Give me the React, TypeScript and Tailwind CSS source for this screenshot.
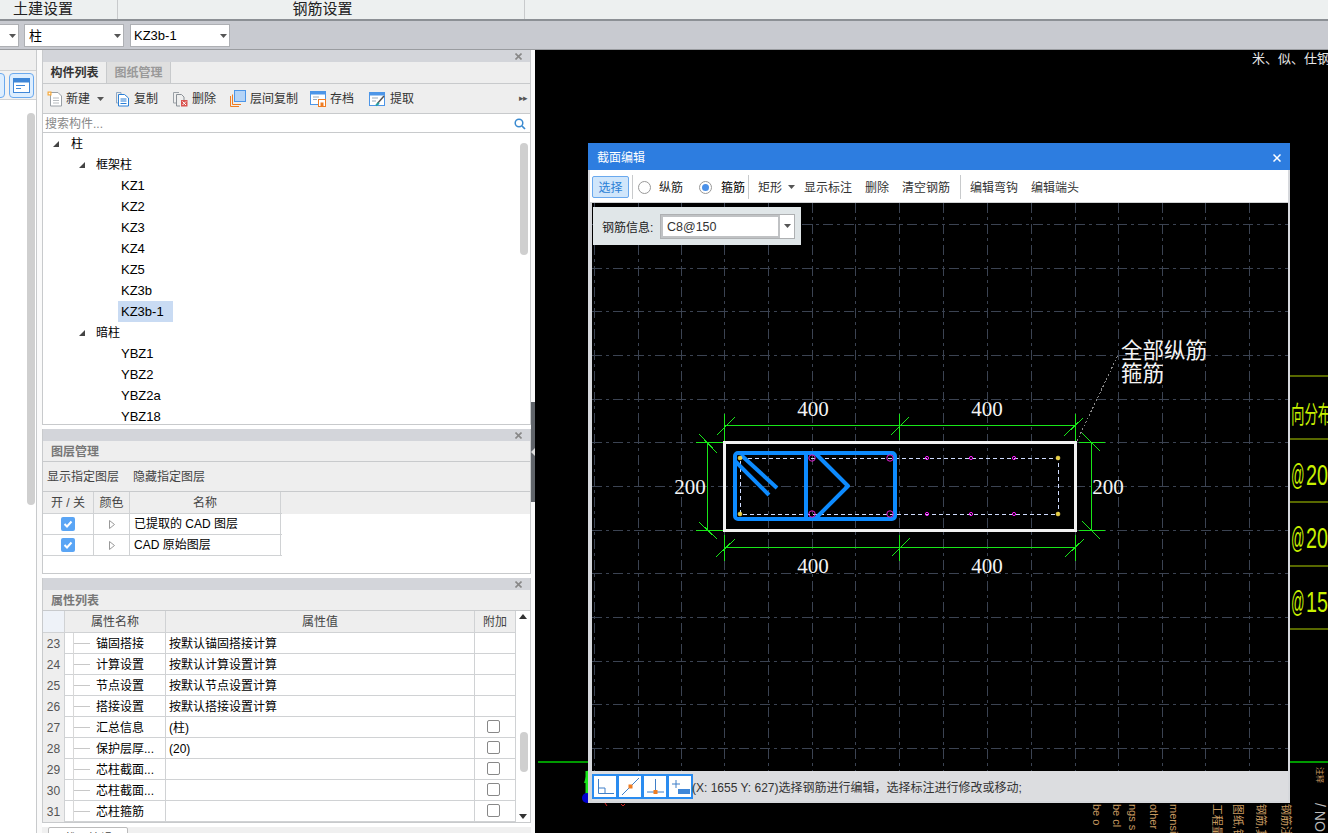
import React from "react";

const Caret = ({ className = "" }: { className?: string }) => (
  <svg width="7" height="4" viewBox="0 0 7 4" className={className}><polygon points="0,0 7,0 3.5,4" fill="#555" /></svg>
);

const Close = () => (
  <svg width="7" height="7" viewBox="0 0 7 7" className="mr-2"><path d="M0.5 0.5L6.5 6.5M6.5 0.5L0.5 6.5" stroke="#888" strokeWidth="1.6" /></svg>
);

const TitleStrip = () => (
  <div className="h-[12px] shrink-0 bg-[#d3d5da] flex items-center justify-end"><Close /></div>
);

const Expand = ({ className = "" }: { className?: string }) => (
  <svg width="8" height="8" viewBox="0 0 8 8" className={className}><polygon points="7,1 7,7 1,7" fill="#444" /></svg>
);

const NewIcon = () => (
  <svg width="16" height="16" viewBox="0 0 16 16">
    <path d="M3.5 1.5H11L14.5 5V15H3.5Z" fill="#fff" stroke="#9aa0a6" />
    <path d="M6 7H12M6 9.5H12M6 12H12" stroke="#b8bcc0" />
    <rect x="0.5" y="0.5" width="4" height="4" fill="#f7a93b" />
    <rect x="1.7" y="1.7" width="1.6" height="1.6" fill="#fff" />
  </svg>
);
const CopyIcon = () => (
  <svg width="15" height="16" viewBox="0 0 15 16">
    <path d="M1.5 1.5H6V3" fill="none" stroke="#8fa8c4" />
    <path d="M1.5 1.5V12H3" fill="none" stroke="#8fa8c4" />
    <path d="M3.5 3.5H9.5L13.5 7V15H3.5Z" fill="#fff" stroke="#2a7fd6" />
    <path d="M5.5 8H11.5M5.5 10H11.5M5.5 12.5H11.5" stroke="#2a7fd6" />
  </svg>
);
const DelIcon = () => (
  <svg width="16" height="16" viewBox="0 0 16 16">
    <path d="M1.5 1.5H7M1.5 1.5V12H4" fill="none" stroke="#9aa0a6" />
    <path d="M4.5 3.5H9.5L12 6V9M4.5 3.5V15H8" fill="none" stroke="#8a9096" />
    <rect x="9" y="9" width="6.5" height="6.5" fill="#d9534f" />
    <path d="M10.5 10.5L14 14M14 10.5L10.5 14" stroke="#fff" />
  </svg>
);
const LayerIcon = () => (
  <svg width="16" height="17" viewBox="0 0 16 17">
    <path d="M0.5 6V16.5H9" fill="none" stroke="#ef7d22" />
    <path d="M2.5 4.5V14.5H11" fill="none" stroke="#ef7d22" />
    <rect x="4.5" y="0.5" width="11" height="11" fill="#b5d4f7" stroke="#4d96e8" />
  </svg>
);
const SaveIcon = () => (
  <svg width="16" height="16" viewBox="0 0 16 16">
    <rect x="0.5" y="0.5" width="15" height="13" fill="#fff" stroke="#4d96e8" />
    <rect x="0.5" y="0.5" width="15" height="3" fill="#4d96e8" />
    <path d="M3 6H9M3 8.5H7" stroke="#9ab" />
    <rect x="8.5" y="8.5" width="7" height="7" fill="#fff" stroke="#ef7d22" />
    <rect x="10.5" y="11.5" width="3" height="4" fill="#ef7d22" />
  </svg>
);
const ExtractIcon = () => (
  <svg width="17" height="16" viewBox="0 0 17 16">
    <rect x="0.5" y="1.5" width="15" height="13" fill="#fff" stroke="#4d96e8" />
    <rect x="0.5" y="1.5" width="15" height="3" fill="#4d96e8" />
    <path d="M3 7H9M3 10H7" stroke="#9ab" />
    <path d="M8 13L15 5" stroke="#555" strokeWidth="1.5" />
    <path d="M7 14.5L10 12" stroke="#27a3a3" strokeWidth="2" />
  </svg>
);

const tools: { icon: React.ReactNode; label: string; w: string }[] = [
  { icon: <CopyIcon />, label: "复制", w: "w-[57px]" },
  { icon: <DelIcon />, label: "删除", w: "w-[58px]" },
  { icon: <LayerIcon />, label: "层间复制", w: "w-[80px]" },
  { icon: <SaveIcon />, label: "存档", w: "w-[59px]" },
  { icon: <ExtractIcon />, label: "提取", w: "w-[60px]" },
];

const tree: { t: string; level: number; sel?: boolean }[] = [
  { t: "柱", level: 0 },
  { t: "框架柱", level: 1 },
  { t: "KZ1", level: 2 },
  { t: "KZ2", level: 2 },
  { t: "KZ3", level: 2 },
  { t: "KZ4", level: 2 },
  { t: "KZ5", level: 2 },
  { t: "KZ3b", level: 2 },
  { t: "KZ3b-1", level: 2, sel: true },
  { t: "暗柱", level: 1 },
  { t: "YBZ1", level: 2 },
  { t: "YBZ2", level: 2 },
  { t: "YBZ2a", level: 2 },
  { t: "YBZ18", level: 2 },
];

const TreeRow = ({ t, level, sel }: { t: string; level: number; sel?: boolean }) => {
  if (level === 2) {
    return (
      <div className="h-[21px] flex items-center pl-[75px] shrink-0 text-[13px]">
        <span className={"h-[21px] leading-[21px] pl-[3px] " + (sel ? "bg-[#c9dbf3] pr-[9px]" : "pr-[3px]")}>{t}</span>
      </div>
    );
  }
  return (
    <div className={"h-[21px] flex items-center shrink-0 " + (level === 0 ? "pl-[9px]" : "pl-[35px]")}>
      <Expand className={level === 0 ? "mr-[11px]" : "mr-[10px]"} />
      <span>{t}</span>
    </div>
  );
};

const Check = () => (
  <span className="w-[14px] h-[14px] rounded-[2px] bg-[#5aa5f5] flex items-center justify-center">
    <svg width="10" height="8" viewBox="0 0 10 8"><path d="M1.5 4L4 6.5L8.5 1.5" fill="none" stroke="#fff" strokeWidth="2" /></svg>
  </span>
);

const SmallTri = () => (
  <svg width="6" height="9" viewBox="0 0 6 9"><polygon points="0.5,0.5 5.5,4.5 0.5,8.5" fill="#fff" stroke="#999" /></svg>
);

const LayerRow = ({ name }: { name: string }) => (
  <div className="grid grid-cols-[51px_36px_151px] h-[21px] w-[239px] bg-white border-b border-[#d0d2d4]">
    <div className="border-r border-[#d0d2d4] flex items-center justify-center"><Check /></div>
    <div className="border-r border-[#d0d2d4] flex items-center justify-center"><SmallTri /></div>
    <div className="flex items-center pl-[4px] border-r border-[#d0d2d4]">{name}</div>
  </div>
);

const props: { n: number; name: string; val: string; box?: boolean }[] = [
  { n: 23, name: "锚固搭接", val: "按默认锚固搭接计算" },
  { n: 24, name: "计算设置", val: "按默认计算设置计算" },
  { n: 25, name: "节点设置", val: "按默认节点设置计算" },
  { n: 26, name: "搭接设置", val: "按默认搭接设置计算" },
  { n: 27, name: "汇总信息", val: "(柱)", box: true },
  { n: 28, name: "保护层厚...", val: "(20)", box: true },
  { n: 29, name: "芯柱截面...", val: "", box: true },
  { n: 30, name: "芯柱截面...", val: "", box: true },
  { n: 31, name: "芯柱箍筋", val: "", box: true },
];

const gridX = [594, 638, 681, 724, 768, 812, 855, 899, 943, 987, 1031, 1075, 1118, 1162, 1205, 1249];
const gridY = [224, 268, 311, 355, 399, 442, 486, 530, 573, 617, 661, 704, 748];

const DIMS = [
  "M724 413V440M899 413V439M1075 413V440M724 425H1075",
  "M716 435L734 417M890 435L908 417M1064 435L1083 417",
  "M724 534V560M899 534V560M1075 534V560M724 547H1075",
  "M716 556L735 538M891 556L909 538M1065 556L1084 538",
  "M707 442V530M695 442H722M695 530H722",
  "M699 434L717 453M699 522L717 539",
  "M1091 442V530M1078 442H1104M1078 530H1104",
  "M1082 433L1100 451M1082 521L1100 539",
];

const CadSection = () => (
  <svg viewBox="592 203 696 568" width="696" height="568" className="block absolute left-0 top-0">
    <g shapeRendering="crispEdges">
      {gridX.map((x) => (
        <path key={x} d={`M${x}.5 203V771`} stroke="#3b4352" strokeDasharray="10 4 3 4" />
      ))}
      {gridY.map((y) => (
        <path key={y} d={`M592 ${y}.5H1288`} stroke="#3b4352" strokeDasharray="10 4 3 4" />
      ))}
      <path d="M1077 441L1118 355" stroke="#888" strokeDasharray="2 2" />
      {DIMS.map((d) => (
        <path key={d} d={d} stroke="#19e619" fill="none" transform="translate(0.5 0.5)" />
      ))}
      <rect x="724" y="442" width="351" height="88" fill="none" stroke="#f2f2f2" strokeWidth="3" />
      <rect x="740.5" y="458.5" width="318" height="56" fill="none" stroke="#cfdcff" strokeDasharray="4 3" />
    </g>
    <g fill="none" stroke="#0d8bff" strokeWidth="4" strokeLinejoin="round">
      <rect x="735" y="453" width="160" height="66" rx="3" />
      <path d="M806 453V519" />
      <path d="M815 453L848 486L815 519" />
      <path d="M741 455L777 488" />
      <path d="M735 461L769 495" />
    </g>
    {[[812, 458], [812, 514], [890, 458], [890, 514]].map(([x, y]) => (
      <circle key={`${x}${y}`} cx={x} cy={y} r="3.2" fill="none" stroke="#e020d0" />
    ))}
    {[[927, 458], [927, 514], [971, 458], [971, 514], [1014, 458], [1014, 514]].map(([x, y]) => (
      <circle key={`${x}${y}`} cx={x} cy={y} r="1.6" fill="none" stroke="#ff20ff" />
    ))}
    {[[740, 458], [740, 514], [1058, 458], [1058, 514]].map(([x, y]) => (
      <circle key={`${x}${y}`} cx={x} cy={y} r="2" fill="#e8d040" stroke="#ffe060" strokeWidth="0.5" />
    ))}
    <g fontFamily="'Liberation Serif',serif" fontSize="21" fill="#f4f4f4" textAnchor="middle">
      <text x="813" y="416">400</text>
      <text x="987" y="416">400</text>
      <text x="813" y="573">400</text>
      <text x="987" y="573">400</text>
      <text x="690" y="494">200</text>
      <text x="1108" y="494">200</text>
    </g>
    <g fontFamily="'Noto Sans CJK SC',sans-serif" fontSize="21.5" fill="#f4f4f4">
      <text x="1121" y="358">全部纵筋</text>
      <text x="1121" y="381">箍筋</text>
    </g>
  </svg>
);

const CadNum = ({ y, d }: { y: number; d: string }) => (
  <>
    <text transform={`translate(1291 ${y}) scale(0.46 1)`}>@</text>
    <text transform={`translate(1306 ${y}) scale(0.68 1)`}>{d}</text>
  </>
);

const CadBackground = () => (
  <svg viewBox="535 50 793 783" width="793" height="783" className="absolute left-0 top-0">
    <path d="M538 762H588M1290 762H1328" stroke="#009a00" strokeWidth="2" />
    <path d="M1290 376H1328M1290 439H1328M1290 502H1328M1290 566H1328M1290 629H1328" stroke="#768a00" strokeWidth="1.5" />
    <path d="M587 771V795" stroke="#19e619" strokeWidth="3" />
    <polygon points="584,783 588,770 588,783" fill="#19e619" />
    <circle cx="587" cy="798" r="5" fill="#0000d0" />
    <path d="M605 803L607 806M621 804L623 806M625 804L623 806" stroke="#d02020" />
    <g fontFamily="'Liberation Sans','Noto Sans CJK SC',sans-serif" fill="#c8f000" fontSize="29">
      <text transform="translate(1291 423) scale(0.56 1)" fontSize="24">向分布</text>
      <CadNum y={485} d="20" />
      <CadNum y={548} d="20" />
      <CadNum y={612} d="15" />
    </g>
    <text x="1252" y="63" fontFamily="'Noto Sans CJK SC',sans-serif" fontSize="13" fill="#e8e8e8">米、似、仕钢</text>
    <g fontFamily="'Liberation Sans','Noto Sans CJK SC',sans-serif" fontSize="11" fill="#c89a60">
      {[
        [1093, "be o"],
        [1113, "be cl"],
        [1129, "ngs s"],
        [1150, "other"],
        [1170, "mensi"],
        [1213, "工程量计算"],
        [1234, "图纸,钢筋"],
        [1257, "钢筋,其他"],
        [1282, "钢筋注明"],
      ].map(([x, s]) => (
        <text key={String(x)} transform={`translate(${x} 804) rotate(90)`}>{s}</text>
      ))}
      <text transform="translate(1317 767) rotate(90)" fontSize="8">注释</text>
    </g>
    <text transform="translate(1315 803) rotate(90)" fontFamily="'Liberation Sans',sans-serif" fontSize="14" fill="#bbb">/ NO</text>
  </svg>
);

const Sep = () => <span className="block w-px h-[24px] bg-[#c8cacc] shrink-0" />;

const Radio = ({ on }: { on?: boolean }) => (
  <span className="w-[13px] h-[13px] rounded-full border border-[#999] bg-white flex items-center justify-center shrink-0">
    {on && <span className="w-[7px] h-[7px] rounded-full bg-[#4a90e8]" />}
  </span>
);

const SnapBtn = ({ children }: { children: React.ReactNode }) => (
  <span className="w-[26px] h-[25px] border-2 border-[#2a8cf0] bg-white -mr-px shrink-0 flex items-center justify-center">
    <svg width="21" height="21" viewBox="0 0 21 21">{children}</svg>
  </span>
);

const Dialog = () => (
  <div className="absolute left-[53px] top-[93px] w-[702px] h-[660px] bg-[#d6d8dc] flex flex-col text-[12px]">
    <div className="h-[27px] bg-[#2d7de0] text-white flex items-center justify-between pl-[9px] pr-[9px] pt-[2px] shrink-0">
      <span>截面编辑</span>
      <svg width="8" height="8" viewBox="0 0 8 8"><path d="M0.5 0.5L7.5 7.5M7.5 0.5L0.5 7.5" stroke="#fff" strokeWidth="1.5" /></svg>
    </div>
    <div className="h-[33px] ml-[2px] mr-[2px] bg-white flex items-center shrink-0 text-[#333] border-b border-[#d0d2d4] pt-[2px]">
      <span className="ml-[2px] w-[37px] h-[22px] bg-[#d0e6fb] border border-[#6aa9ee] rounded-[2px] text-[#2a7fd6] flex items-center justify-center shrink-0 pt-px">选择</span>
      <span className="ml-[3px]"><Sep /></span>
      <span className="ml-[5px]"><Radio /></span>
      <span className="ml-[8px] pt-[2px] text-[#222]">纵筋</span>
      <span className="ml-[16px]"><Radio on /></span>
      <span className="ml-[9px] pt-[2px] text-black">箍筋</span>
      <span className="ml-[3px]"><Sep /></span>
      <span className="ml-[9px] pt-[2px]">矩形</span>
      <Caret className="ml-[6px]" />
      <span className="ml-[9px] pt-[2px]">显示标注</span>
      <span className="ml-[13px] pt-[2px]">删除</span>
      <span className="ml-[13px] pt-[2px]">清空钢筋</span>
      <span className="ml-[10px]"><Sep /></span>
      <span className="ml-[9px] pt-[2px]">编辑弯钩</span>
      <span className="ml-[13px] pt-[2px]">编辑端头</span>
    </div>
    <div className="relative h-[568px] ml-[4px] mr-[2px] bg-black shrink-0 overflow-hidden">
      <CadSection />
      <div className="absolute left-[1px] top-[4px] w-[208px] h-[38px] bg-[#e0e6e8] flex items-center pl-[9px]">
        <span className="text-[#222] w-[58px] shrink-0 pt-[3px]">钢筋信息:</span>
        <div className="w-[135px] h-[25px] bg-white border border-[#aeb0b2] flex items-center">
          <span className="flex-1 h-full border-2 border-[#c0c2c4] pl-[4px] pt-[2px] flex items-center text-[#333] text-[12.5px]">C8@150</span>
          <span className="w-[14px] flex justify-center"><Caret /></span>
        </div>
      </div>
    </div>
    <div className="h-[30px] ml-[4px] mr-[2px] bg-[#dcdde0] flex items-center text-[#333] shrink-0">
      <SnapBtn>
        <path d="M3.5 3V17.5H19M3.5 12H10V17" fill="none" stroke="#3f7fc8" />
      </SnapBtn>
      <SnapBtn>
        <path d="M2 19L19 2" stroke="#3f7fc8" />
        <rect x="8.5" y="8.5" width="4" height="4" fill="#ef7d22" />
      </SnapBtn>
      <SnapBtn>
        <path d="M10.5 3V16M2 16H19" stroke="#3f7fc8" />
        <rect x="8.5" y="14" width="4" height="4" fill="#ef7d22" />
      </SnapBtn>
      <SnapBtn>
        <path d="M6 4V12M2 8H10" stroke="#3f7fc8" />
        <rect x="8" y="13" width="12" height="5" fill="#3f87d8" />
      </SnapBtn>
      <span className="whitespace-nowrap pt-[3px]">(X: 1655 Y: 627)选择钢筋进行编辑，选择标注进行修改或移动;</span>
    </div>
  </div>
);

const PanelTitle = ({ t }: { t: string }) => (
  <div className="h-[21px] shrink-0 border-b border-[#c8cacc] bg-[#eee] pl-[8px] pt-[2px] flex items-center font-bold text-[#777]">{t}</div>
);

export default function App() {
  return (
    <div className="w-[1328px] h-[833px] overflow-hidden flex flex-col bg-white text-[12px] text-black [font-family:'Liberation_Sans','Noto_Sans_CJK_SC',sans-serif]">
      <div className="h-[21px] bg-[#edf0f0] border-b-2 border-[#8c9095] flex shrink-0 text-[15px] text-[#222]">
        <div className="w-[118px] border-r border-[#c8cacc] pl-[13px] leading-[17px]">土建设置</div>
        <div className="w-[407px] border-r border-[#c8cacc] text-center pl-[3px] leading-[17px]">钢筋设置</div>
      </div>
      <div className="h-[29px] bg-[#c8cad0] border-b border-[#9a9ca0] flex items-center shrink-0 pt-px">
        <div className="w-[19px] h-[23px] bg-white border border-[#aeb0b4] border-l-0 flex items-center justify-end pr-[2px]"><Caret /></div>
        <div className="ml-[5px] w-[100px] h-[23px] bg-white border border-[#aeb0b4] flex items-center justify-between pl-[4px] pr-[2px] text-[13px]">柱<Caret /></div>
        <div className="ml-[6px] w-[100px] h-[23px] bg-white border border-[#aeb0b4] flex items-center justify-between pl-[3px] pr-[2px] text-[13px]">KZ3b-1<Caret /></div>
      </div>

      <div className="flex-1 flex min-h-0">
        <div className="w-[37px] shrink-0 border-r border-[#c8cacc] flex flex-col bg-white">
          <div className="h-[21px] bg-[#efefef] border-b border-[#d0d2d4] shrink-0" />
          <div className="h-[29px] bg-[#f2f2f2] border-b border-[#d0d2d4] shrink-0 flex items-center gap-[4px] -ml-[20px]">
            <span className="w-[25px] h-[25px] rounded-[4px] border border-[#6aa9ee] bg-[#ddeeff] shrink-0" />
            <span className="w-[25px] h-[25px] rounded-[4px] border border-[#6aa9ee] bg-[#ddeeff] shrink-0 flex items-center justify-center">
              <svg width="17" height="15" viewBox="0 0 17 15">
                <rect x="0.5" y="0.5" width="16" height="14" fill="#fff" stroke="#3f87d8" />
                <rect x="0.5" y="0.5" width="16" height="4" fill="#3f87d8" />
                <path d="M3 7.5H12M3 10.5H8" stroke="#3f87d8" />
              </svg>
            </span>
          </div>
          <div className="flex-1 flex justify-end pr-[1px] pt-[13px]">
            <span className="w-[8px] h-[392px] rounded-[4px] bg-[#cfcfcf]" />
          </div>
        </div>
        <div className="w-[5px] shrink-0 bg-[#fafafa]" />

        <div className="w-[489px] shrink-0 flex flex-col gap-[4px]">
          <div className="h-[375px] shrink-0 border border-[#c8cacc] border-t-0 flex flex-col bg-[#eee]">
            <TitleStrip />
            <div className="h-[22px] shrink-0 flex border-b border-[#c8cacc]">
              <span className="w-[64px] flex items-center justify-center font-bold text-[#333] border-r border-[#c8cacc]">构件列表</span>
              <span className="w-[64px] flex items-center justify-center font-bold text-[#999] bg-[#dfdfdf] border-r border-[#c8cacc]">图纸管理</span>
            </div>
            <div className="h-[30px] shrink-0 flex items-center border-b border-[#c8cacc] text-[#333] pl-[4px]">
              <span className="w-[68px] flex items-center gap-[3px] shrink-0"><NewIcon />新建<Caret className="ml-[4px]" /></span>
              {tools.map((t) => (
                <span key={t.label} className={t.w + " flex items-center gap-[4px] shrink-0"}>{t.icon}{t.label}</span>
              ))}
              <span className="ml-auto mr-[3px] text-[9px] text-[#555] tracking-[-1px]">▸▸</span>
            </div>
            <div className="h-[19px] shrink-0 bg-white border-b border-[#c8cacc] flex items-center justify-between pl-[2px] pr-[4px] pt-[2px] text-[#888]">
              搜索构件...
              <svg width="12" height="12" viewBox="0 0 12 12"><circle cx="5" cy="5" r="3.8" fill="none" stroke="#3a8ad0" strokeWidth="1.5" /><path d="M8 8L11 11" stroke="#3a8ad0" strokeWidth="1.7" /></svg>
            </div>
            <div className="relative flex-1 bg-white flex flex-col overflow-hidden min-h-0">
              {tree.map((r) => <TreeRow key={r.t} {...r} />)}
              <span className="absolute right-[2px] top-[10px] w-[8px] h-[112px] rounded-[4px] bg-[#cfcfcf]" />
            </div>
          </div>

          <div className="h-[145px] shrink-0 border border-[#c8cacc] border-t-0 flex flex-col bg-white">
            <TitleStrip />
            <PanelTitle t="图层管理" />
            <div className="h-[30px] shrink-0 bg-[#eee] border-b border-[#c8cacc] flex items-center gap-[14px] pl-[4px] text-[#444]">
              <span>显示指定图层</span><span>隐藏指定图层</span>
            </div>
            <div className="h-[22px] shrink-0 bg-[#eee] text-[#444]">
              <div className="grid grid-cols-[51px_36px_151px] w-[239px] h-[22px] border-b border-[#d0d2d4]">
                <span className="border-r border-[#d0d2d4] flex items-center justify-center">开 / 关</span>
                <span className="border-r border-[#d0d2d4] flex items-center justify-center">颜色</span>
                <span className="border-r border-[#d0d2d4] flex items-center justify-center">名称</span>
              </div>
            </div>
            <LayerRow name="已提取的 CAD 图层" />
            <LayerRow name="CAD 原始图层" />
          </div>

          <div className="h-[245px] shrink-0 border border-[#c8cacc] border-t-0 flex flex-col bg-white">
            <TitleStrip />
            <PanelTitle t="属性列表" />
            <div className="flex-1 flex min-h-0">
              <div className="w-[473px] shrink-0 flex flex-col">
                <div className="grid grid-cols-[22px_101px_309px_41px] h-[22px] shrink-0 bg-[#eee] border-b border-[#d0d2d4] text-[#444]">
                  <span className="border-r border-[#d0d2d4] bg-[#eef2f8]" />
                  <span className="border-r border-[#d0d2d4] flex items-center justify-center pt-px">属性名称</span>
                  <span className="border-r border-[#d0d2d4] flex items-center justify-center pt-px">属性值</span>
                  <span className="border-r border-[#d0d2d4] flex items-center justify-center pt-px">附加</span>
                </div>
                {props.map((p) => (
                  <div key={p.n} className="grid grid-cols-[22px_101px_309px_41px] h-[21px] shrink-0 border-b border-[#d0d2d4]">
                    <span className="bg-[#eee] border-r border-[#d0d2d4] flex items-center justify-center text-[#555]">{p.n}</span>
                    <span className="border-r border-[#d0d2d4] flex items-center whitespace-nowrap">
                      <span className="ml-[8px] w-px h-[21px] bg-[#d8d8d8]" />
                      <span className="w-[16px] h-px bg-[#c8c8c8]" />
                      <span className="ml-[6px]">{p.name}</span>
                    </span>
                    <span className="border-r border-[#d0d2d4] flex items-center pl-[3px]">{p.val}</span>
                    <span className="border-r border-[#d0d2d4] flex items-center justify-center pr-[3px]">
                      {p.box && <span className="w-[13px] h-[13px] rounded-[2px] border border-[#888] bg-white -mt-[3px]" />}
                    </span>
                  </div>
                ))}
              </div>
              <div className="flex-1 relative flex flex-col items-center justify-between py-[3px] bg-white">
                <svg width="8" height="5" viewBox="0 0 8 5"><polygon points="0,5 8,5 4,0" fill="#333" /></svg>
                <span className="absolute left-[4px] top-[121px] w-[8px] h-[40px] rounded-[4px] bg-[#cfcfcf]" />
                <svg width="8" height="5" viewBox="0 0 8 5"><polygon points="0,0 8,0 4,5" fill="#333" /></svg>
              </div>
            </div>
          </div>
          <div className="flex-1 bg-[#f0f0f0] pl-[6px] overflow-hidden">
            <div className="w-[80px] h-[24px] bg-white border border-[#bbb] rounded-[2px] flex justify-center pt-[2px] text-[#444]">截面编辑</div>
          </div>
        </div>

        <div className="relative w-[4px] shrink-0 bg-[#fafafa] flex flex-col">
          <span className="h-[352px] shrink-0" />
          <span className="h-[100px] w-[4px] bg-[#60646a] flex items-center">
            <svg width="4" height="8" viewBox="0 0 4 8"><polygon points="4,0 4,8 0,4" fill="#ddd" /></svg>
          </span>
        </div>

        <div className="relative flex-1 bg-black overflow-hidden">
          <CadBackground />
          <Dialog />
        </div>
      </div>
    </div>
  );
}
